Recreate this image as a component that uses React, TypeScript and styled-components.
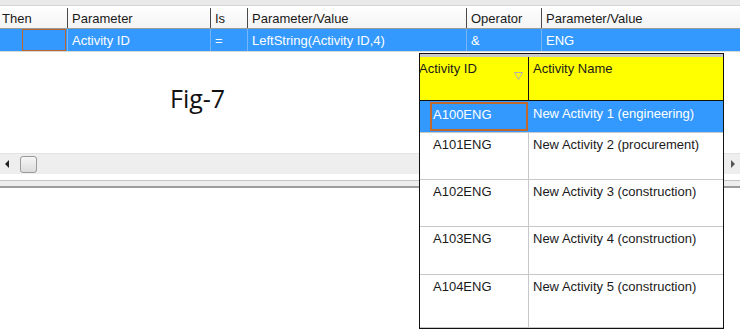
import React from "react";
import styled, { createGlobalStyle } from "styled-components";

const GlobalStyle = createGlobalStyle`
  html, body {
    margin: 0;
    padding: 0;
    background: #ffffff;
  }
  body {
    font-family: "Liberation Sans", Arial, sans-serif;
    font-size: 13px;
    color: #1a1a1a;
  }
`;

const columns = "67px 143px 37px 219px 75px 1fr";

const headers = ["Then", "Parameter", "Is", "Parameter/Value", "Operator", "Parameter/Value"];
const selected = ["", "Activity ID", "=", "LeftString(Activity ID,4)", "&", "ENG"];

const activities = [
  { id: "A100ENG", name: "New Activity 1 (engineering)" },
  { id: "A101ENG", name: "New Activity 2 (procurement)" },
  { id: "A102ENG", name: "New Activity 3 (construction)" },
  { id: "A103ENG", name: "New Activity 4 (construction)" },
  { id: "A104ENG", name: "New Activity 5 (construction)" },
];

const rowHeights = [32, 47, 47, 48];

const App = () => {
  return (
    <Page>
      <GlobalStyle />
      <TopStrip />
      <HeaderRow>
        {headers.map((h, i) => (
          <HeaderCell key={i} first={i === 0}>
            {h}
          </HeaderCell>
        ))}
      </HeaderRow>
      <SelectedRow>
        {selected.map((v, i) =>
          i === 0 ? (
            <FirstCell key={i}>
              <FocusBox />
            </FirstCell>
          ) : (
            <SelectedCell key={i}>{v}</SelectedCell>
          )
        )}
      </SelectedRow>
      <EmptyArea>
        <Caption>Fig-7</Caption>
      </EmptyArea>
      <ScrollBar>
        <Arrow>
          <svg width="5" height="8" viewBox="0 0 5 8">
            <path d="M4 0 L0 4 L4 8 Z" fill="#222" />
          </svg>
        </Arrow>
        <Thumb />
        <Spacer />
        <Arrow>
          <svg width="5" height="8" viewBox="0 0 5 8">
            <path d="M1 0 L5 4 L1 8 Z" fill="#555" />
          </svg>
        </Arrow>
      </ScrollBar>
      <Splitter />

      <Popup>
        <PopupHeader>
          <PopHeadCell first>
            <ClipText>Activity ID</ClipText>
            <FilterMark>
              <svg width="9" height="8" viewBox="0 0 9 8">
                <path d="M0.5 0.5 L8.5 0.5 L4.5 7.5 Z" fill="none" stroke="#b0b0b0" strokeWidth="1" />
              </svg>
            </FilterMark>
          </PopHeadCell>
          <PopHeadCell>Activity Name</PopHeadCell>
        </PopupHeader>
        {activities.map((a, i) => (
          <PopRow
            key={a.id}
            active={i === 0}
            last={i === activities.length - 1}
            style={i < rowHeights.length ? { height: rowHeights[i] } : undefined}
          >
            <IdCell active={i === 0}>
              {i === 0 ? <IdFocus>{a.id}</IdFocus> : a.id}
            </IdCell>
            <NameCell active={i === 0}>{a.name}</NameCell>
          </PopRow>
        ))}
      </Popup>
    </Page>
  );
};

const Page = styled.div`
  position: relative;
  width: 740px;
  height: 330px;
  overflow: hidden;
  display: flex;
  flex-direction: column;
`;

const TopStrip = styled.div`
  height: 6px;
  background: #e9e9e9;
  border-bottom: 1px solid #d6d6d6;
  box-sizing: border-box;
`;

const HeaderRow = styled.div`
  display: grid;
  grid-template-columns: ${columns};
  height: 23px;
  background: linear-gradient(#ffffff, #f4f4f4);
  border-bottom: 1px solid #9a9a9a;
  box-sizing: border-box;
`;

const HeaderCell = styled.div<{ first?: boolean }>`
  display: flex;
  align-items: center;
  padding-left: ${(p) => (p.first ? "2px" : "4px")};
  border-left: ${(p) => (p.first ? "none" : "1px solid #4a4a4a")};
  margin-top: 2px;
  color: #1a1a1a;
  white-space: nowrap;
`;

const SelectedRow = styled.div`
  display: grid;
  grid-template-columns: ${columns};
  height: 23px;
  background: #3399ff;
  border-bottom: 1px solid #d8d8d8;
  box-sizing: border-box;
`;

const FirstCell = styled.div`
  display: flex;
  padding-left: 22px;
`;

const FocusBox = styled.div`
  flex: 1;
  border: 1px solid #b8662e;
  margin-right: 1px;
`;

const SelectedCell = styled.div`
  display: flex;
  align-items: center;
  padding-left: 4px;
  border-left: 1px solid #74b6f7;
  color: #ffffff;
  white-space: nowrap;
`;

const EmptyArea = styled.div`
  height: 101px;
  padding: 31px 0 0 170px;
  box-sizing: border-box;
`;

const Caption = styled.div`
  font-family: "Open Sans", "Liberation Sans", sans-serif;
  font-size: 25px;
  line-height: 30px;
  color: #111111;
`;

const ScrollBar = styled.div`
  height: 21px;
  display: flex;
  align-items: center;
  background: #eeeeee;
  border-top: 1px solid #e2e2e2;
  box-sizing: border-box;
`;

const Arrow = styled.div`
  width: 15px;
  display: flex;
  justify-content: center;
  align-items: center;
`;

const Thumb = styled.div`
  width: 17px;
  height: 17px;
  margin-left: 5px;
  box-sizing: border-box;
  border: 1px solid #9a9a9a;
  border-radius: 3px;
  background: linear-gradient(#f6f6f6, #dcdcdc);
`;

const Spacer = styled.div`
  flex: 1;
`;

const Splitter = styled.div`
  height: 8px;
  margin-top: 6px;
  background: #eeeeee;
  border-top: 1px solid #c4c4c4;
  border-bottom: 2px solid #9c9c9c;
  box-sizing: border-box;
`;

const Popup = styled.div`
  position: absolute;
  left: 419px;
  top: 53px;
  width: 305px;
  height: 276px;
  box-sizing: border-box;
  border: 1px solid #111111;
  background: #ffffff;
  display: flex;
  flex-direction: column;
`;

const PopupHeader = styled.div`
  display: grid;
  grid-template-columns: 108px 1fr;
  height: 47px;
  background: #ffff00;
  border-top: 3px solid #c8c8c8;
  border-bottom: 1px solid #111111;
  box-sizing: border-box;
`;

const PopHeadCell = styled.div<{ first?: boolean }>`
  position: relative;
  padding: 4px 0 0 ${(p) => (p.first ? "0" : "4px")};
  border-left: ${(p) => (p.first ? "none" : "1px solid #111111")};
  overflow: hidden;
  white-space: nowrap;
  color: #1a1a1a;
`;

const ClipText = styled.span`
  margin-left: -1px;
`;

const FilterMark = styled.span`
  position: absolute;
  right: 5px;
  top: 15px;
  display: flex;
`;

const PopRow = styled.div<{ active?: boolean; last?: boolean }>`
  display: grid;
  grid-template-columns: 108px 1fr;
  flex: ${(p) => (p.last ? "1" : "none")};
  box-sizing: border-box;
  border-bottom: 1px solid #c8c8c8;
  background: ${(p) => (p.active ? "#3399ff" : "#ffffff")};
`;

const IdCell = styled.div<{ active?: boolean }>`
  display: flex;
  align-items: flex-start;
  padding: ${(p) => (p.active ? "1px 0 1px 10px" : "4px 0 0 13px")};
  color: ${(p) => (p.active ? "#ffffff" : "#1a1a1a")};
  white-space: nowrap;
`;

const IdFocus = styled.div`
  flex: 1;
  align-self: stretch;
  border: 2px solid #c0682e;
  padding: 3px 0 0 1px;
`;

const NameCell = styled.div<{ active?: boolean }>`
  padding: ${(p) => (p.active ? "5px 0 0 4px" : "4px 0 0 4px")};
  border-left: 1px solid ${(p) => (p.active ? "#3399ff" : "#c8c8c8")};
  color: ${(p) => (p.active ? "#ffffff" : "#1a1a1a")};
  white-space: nowrap;
`;

export default App;
